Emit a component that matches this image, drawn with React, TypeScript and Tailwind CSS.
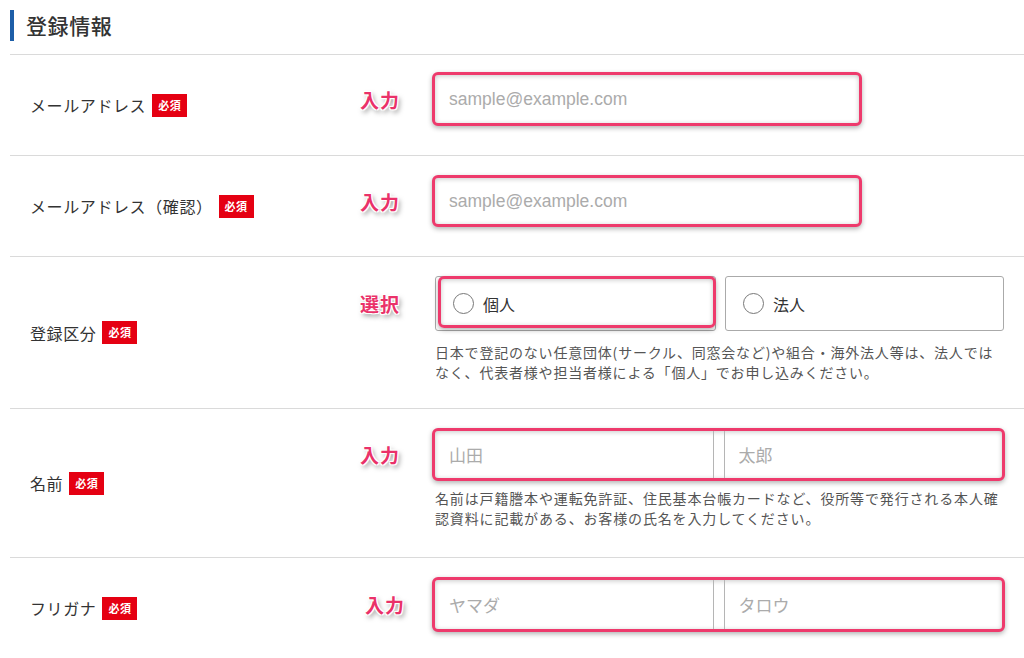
import React from "react";

const JP = "font-['Noto_Sans_CJK_JP',sans-serif]";

function Badge() {
    return (
        <span className="ml-[6px] inline-flex h-[23px] w-[35px] items-center justify-center bg-[#e50012] text-[11px] font-bold leading-none text-white tracking-[0.5px]">
            必須
        </span>
    );
}

function Marker({ text, shift = false }: { text: string; shift?: boolean }) {
    return (
        <div className={`flex w-[72px] shrink-0 items-center ${shift ? "pl-[5px]" : ""}`}>
            <span className="text-[19px] font-bold leading-none tracking-[1px] text-[#ea3169] [text-shadow:1px_1px_0_#fff,-1px_-1px_0_#fff,1px_-1px_0_#fff,-1px_1px_0_#fff,0_0_3px_#fff,2px_3px_5px_rgba(0,0,0,0.5)]">
                {text}
            </span>
        </div>
    );
}

const RING =
    "rounded-[6px] border-[3px] border-[#ee3a6c] shadow-[0_2px_5px_rgba(0,0,0,0.3),inset_0_1px_5px_rgba(0,0,0,0.22)]";

function Label({ text }: { text: string }) {
    return (
        <div className="flex w-[350px] shrink-0 items-center pl-[20px]">
            <span className="text-[16px] leading-none tracking-[0.6px] text-[#333]">{text}</span>
            <Badge />
        </div>
    );
}

function SingleInput({ placeholder, h }: { placeholder: string; h: string }) {
    return (
        <div className={`${RING} ${h} w-[430px] bg-white`}>
            <input
                placeholder={placeholder}
                className="h-full w-full bg-transparent pl-[14px] font-['Liberation_Sans','Noto_Sans_CJK_JP',sans-serif] text-[17.5px] outline-none placeholder:text-[#ababab]"
            />
        </div>
    );
}

function PairInput({ a, b, h }: { a: string; b: string; h: string }) {
    return (
        <div className={`${RING} ${h} flex w-[573px] gap-[10px] rounded-[5px] bg-white`}>
            <div className="flex-1 border-r border-[#b5b5b5]">
                <input
                    placeholder={a}
                    className="h-full w-full bg-transparent pl-[14px] text-[17px] outline-none placeholder:text-[#ababab]"
                />
            </div>
            <div className="flex-1 border-l border-[#b5b5b5]">
                <input
                    placeholder={b}
                    className="h-full w-full bg-transparent pl-[14px] text-[17px] outline-none placeholder:text-[#ababab]"
                />
            </div>
        </div>
    );
}

function Radio({ label }: { label: string }) {
    return (
        <div className="flex h-full items-center pl-[17px]">
            <span className="h-[21px] w-[21px] rounded-full border border-[#777] bg-white" />
            <span className="ml-[9px] text-[16px] leading-none text-[#333]">{label}</span>
        </div>
    );
}

export default function App() {
    return (
        <div className={`${JP} min-h-[658px] w-[1024px] overflow-hidden bg-white pl-[10px] text-[#333]`}>
            <div className="flex h-[55px] items-start border-b border-[#dadada] pt-[10px]">
                <div className="h-[31px] w-[4px] bg-[#1d5ea8]" />
                <h2 className="ml-[12px] text-[21px] font-medium leading-[31px] tracking-[0.6px] text-[#333]">登録情報</h2>
            </div>

            <div className="flex h-[101px] border-b border-[#dadada]">
                <Label text="メールアドレス" />
                <div className="flex pt-[17px]">
                    <div className="flex h-[54px]">
                        <Marker text="入力" />
                        <SingleInput placeholder="sample@example.com" h="h-[54px]" />
                    </div>
                </div>
            </div>

            <div className="flex h-[101px] border-b border-[#dadada]">
                <Label text="メールアドレス（確認）" />
                <div className="flex pt-[19px]">
                    <div className="flex h-[52px]">
                        <Marker text="入力" />
                        <SingleInput placeholder="sample@example.com" h="h-[52px]" />
                    </div>
                </div>
            </div>

            <div className="flex h-[152px] border-b border-[#dadada]">
                <Label text="登録区分" />
                <div className="flex items-start pt-[19px]">
                    <div className="flex h-[55px]">
                        <Marker text="選択" />
                    </div>
                    <div className="flex flex-col">
                        <div className="ml-[3px] flex h-[55px] gap-[9px]">
                            <div className="relative w-[281px] rounded-[3px] border border-[#aaa] bg-white">
                                <Radio label="個人" />
                                <div className={`${RING} pointer-events-none absolute -top-px -right-px bottom-[2px] left-[2px]`} />
                            </div>
                            <div className="w-[279px] rounded-[3px] border border-[#aaa] bg-white">
                                <Radio label="法人" />
                            </div>
                        </div>
                        <p className="ml-[3px] mt-[11px] whitespace-nowrap text-[14px] leading-[20px] tracking-[0.8px] text-[#555]">
                            日本で登記のない任意団体(サークル、同窓会など)や組合・海外法人等は、法人では
                            <br />
                            なく、代表者様や担当者様による「個人」でお申し込みください。
                        </p>
                    </div>
                </div>
            </div>

            <div className="flex h-[149px] border-b border-[#dadada]">
                <Label text="名前" />
                <div className="flex pt-[19px]">
                    <div className="flex flex-col">
                        <div className="flex h-[53px]">
                            <Marker text="入力" />
                            <PairInput a="山田" b="太郎" h="h-[53px]" />
                        </div>
                        <p className="ml-[75px] mt-[7px] whitespace-nowrap text-[14px] leading-[20px] tracking-[0.85px] text-[#555]">
                            名前は戸籍謄本や運転免許証、住民基本台帳カードなど、役所等で発行される本人確
                            <br />
                            認資料に記載がある、お客様の氏名を入力してください。
                        </p>
                    </div>
                </div>
            </div>

            <div className="flex h-[100px]">
                <Label text="フリガナ" />
                <div className="flex pt-[19px]">
                    <div className="flex h-[55px]">
                        <Marker text="入力" shift />
                        <PairInput a="ヤマダ" b="タロウ" h="h-[55px]" />
                    </div>
                </div>
            </div>
        </div>
    );
}
